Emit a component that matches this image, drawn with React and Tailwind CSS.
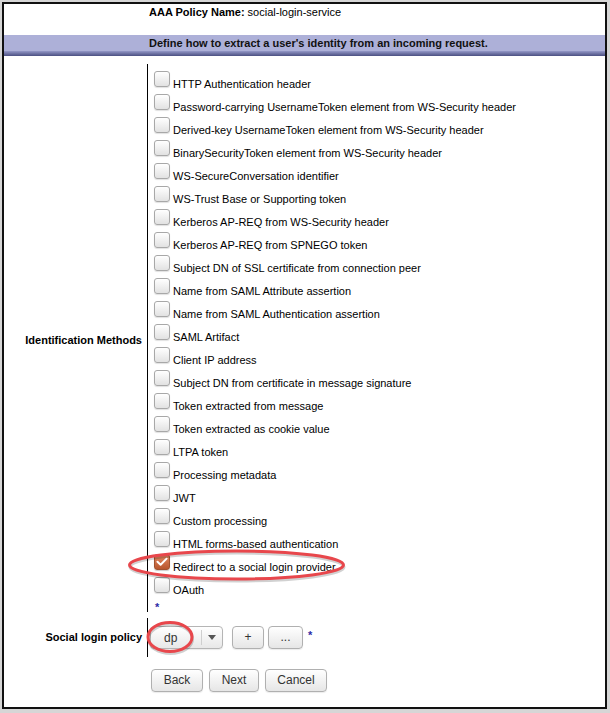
import React from 'react';

const METHODS = [
  'HTTP Authentication header',
  'Password-carrying UsernameToken element from WS-Security header',
  'Derived-key UsernameToken element from WS-Security header',
  'BinarySecurityToken element from WS-Security header',
  'WS-SecureConversation identifier',
  'WS-Trust Base or Supporting token',
  'Kerberos AP-REQ from WS-Security header',
  'Kerberos AP-REQ from SPNEGO token',
  'Subject DN of SSL certificate from connection peer',
  'Name from SAML Attribute assertion',
  'Name from SAML Authentication assertion',
  'SAML Artifact',
  'Client IP address',
  'Subject DN from certificate in message signature',
  'Token extracted from message',
  'Token extracted as cookie value',
  'LTPA token',
  'Processing metadata',
  'JWT',
  'Custom processing',
  'HTML forms-based authentication',
  'Redirect to a social login provider',
  'OAuth',
];

const Box = ({ checked }) =>
  checked ? (
    <span className="w-[16px] h-[16px] shrink-0 rounded-[3px] border border-[#a0522f] bg-linear-to-b from-[#e38a62] to-[#b8562d] flex items-center justify-center shadow-[0_1px_1px_rgba(0,0,0,0.2)]">
      <svg width="12" height="10" viewBox="0 0 12 10">
        <path d="M1.5 4.8 L4.6 7.8 L10.6 1.6" stroke="#fff" strokeWidth="2" fill="none" strokeLinecap="round" strokeLinejoin="round" />
      </svg>
    </span>
  ) : (
    <span className="w-[16px] h-[16px] shrink-0 rounded-[3px] border border-[#a8a8a8] bg-linear-to-b from-white to-[#e2e2e2] shadow-[0_1px_1px_rgba(0,0,0,0.12)]" />
  );

const Btn = ({ children, w }) => (
  <button className={`${w} h-[23px] rounded-[4px] border border-[#b0b0b0] bg-linear-to-b from-white to-[#e6e6e6] text-[12px] text-[#333] leading-[21px] text-center shadow-[0_1px_1px_rgba(0,0,0,0.08)]`}>
    {children}
  </button>
);

export default function App() {
  return (
    <div className="w-[610px] h-[713px] bg-[#d6d6d6] pt-[2px] pl-[2px] font-['Liberation_Sans',Arial,sans-serif] text-[11px] text-black">
      <div className="relative w-[605px] h-[707px] border-2 border-[#111] bg-white">
        {/* policy name */}
        <div className="h-[31px] pl-[145px] pt-[2px] leading-[13px]">
          <span className="font-bold">AAA Policy Name:</span> social-login-service
        </div>

        {/* band */}
        <div className="h-[21px] flex flex-col">
          <div className="h-[16px] bg-[#adb0d8] pl-[145px] pt-[2px] leading-[13px] font-bold text-[#111]">
            Define how to extract a user's identity from an incoming request.
          </div>
          <div className="h-[5px] bg-linear-to-b from-[#9498c7] to-[#4c5082]" />
        </div>

        {/* identification methods */}
        <div className="mt-[8px] flex h-[548px]">
          <div className="w-[143px] pr-[5px] pt-[4px] flex items-center justify-end font-bold">Identification Methods</div>
          <div className="border-l border-black pl-[6px] pt-[7px]">
            {METHODS.map((m, i) => (
              <div key={m} className="h-[23px] flex items-start">
                <Box checked={i === 21} />
                <span className="ml-[3px] pt-[7px] leading-[13px] whitespace-nowrap">{m}</span>
              </div>
            ))}
            <div className="h-[12px] leading-[12px] text-[11px] font-bold text-[#2c2ca6] pl-[1px] pt-[1px]">*</div>
          </div>
        </div>

        {/* social login policy */}
        <div className="mt-[6px] flex h-[39px]">
          <div className="w-[143px] pr-[5px] flex items-center justify-end font-bold">Social login policy</div>
          <div className="border-l border-black pl-[2px] flex items-center">
            <div className="w-[73px] h-[23px] rounded-[4px] border border-[#b5b5b5] bg-linear-to-b from-white to-[#e8e8e8] flex items-center text-[12px] text-[#333] shadow-[0_1px_1px_rgba(0,0,0,0.08)]">
              <span className="pl-[13px] w-[50px]">dp</span>
              <span className="w-px h-[15px] bg-[#cfcfcf]" />
              <svg className="ml-[6px]" width="8" height="5" viewBox="0 0 8 5">
                <path d="M0 0 H8 L4 5 Z" fill="#555" />
              </svg>
            </div>
            <div className="ml-[9px] flex gap-[4px]">
              <Btn w="w-[32px]">+</Btn>
              <Btn w="w-[35px]">...</Btn>
            </div>
            <span className="ml-[5px] -mt-[5px] text-[11px] font-bold text-[#2c2ca6]">*</span>
          </div>
        </div>

        {/* nav buttons */}
        <div className="mt-[12px] pl-[147px] flex gap-[6px]">
          <Btn w="w-[52px]">Back</Btn>
          <Btn w="w-[50px]">Next</Btn>
          <Btn w="w-[62px]">Cancel</Btn>
        </div>

        {/* annotation ellipses */}
        <svg className="absolute left-0 top-0 pointer-events-none" width="601" height="703">
          <ellipse cx="233" cy="563" rx="107" ry="14" fill="none" stroke="rgba(0,0,0,0.18)" strokeWidth="3" />
          <ellipse cx="232.5" cy="561" rx="107" ry="14" fill="none" stroke="#e8474c" strokeWidth="3" />
          <ellipse cx="166.5" cy="635" rx="22" ry="14.5" fill="none" stroke="rgba(0,0,0,0.18)" strokeWidth="3" />
          <ellipse cx="166" cy="633" rx="22" ry="14.5" fill="none" stroke="#e8474c" strokeWidth="3" />
        </svg>
      </div>
    </div>
  );
}
